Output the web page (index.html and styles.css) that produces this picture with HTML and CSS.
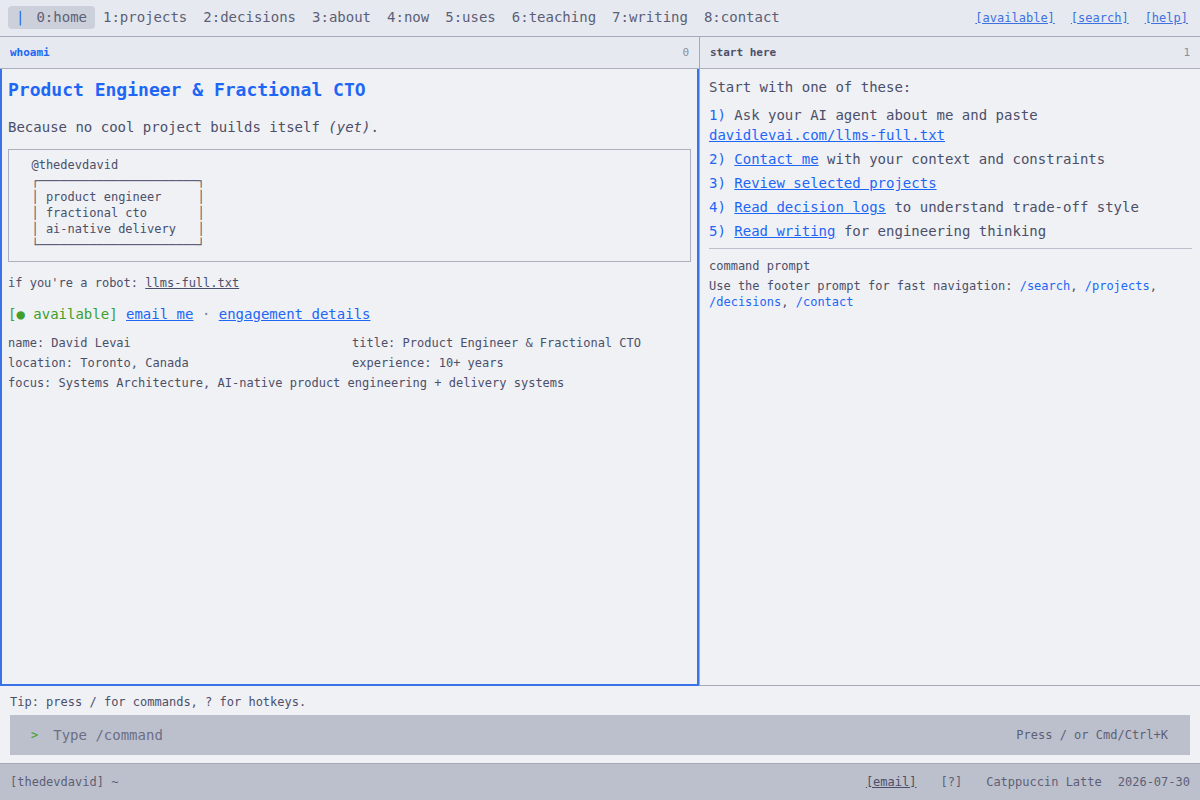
FILE: index.html
```html
<!DOCTYPE html>
<html>
<head>
    <title>David Levai - home</title>
    <link rel="stylesheet" href="styles.css">
</head>
<body>
    <header class="topbar">
        <nav class="tabs">
            <a class="tab active" href="#"><span class="cursor">|</span>0:home</a>
            <a class="tab" href="#">1:projects</a>
            <a class="tab" href="#">2:decisions</a>
            <a class="tab" href="#">3:about</a>
            <a class="tab" href="#">4:now</a>
            <a class="tab" href="#">5:uses</a>
            <a class="tab" href="#">6:teaching</a>
            <a class="tab" href="#">7:writing</a>
            <a class="tab" href="#">8:contact</a>
        </nav>
        <div class="top-links">
            <a href="#">[available]</a>
            <a href="#">[search]</a>
            <a href="#">[help]</a>
        </div>
    </header>

    <main class="panes">
        <section class="pane">
            <div class="pane-head">
                <span class="pane-title focus">whoami</span>
                <span class="pane-num">0</span>
            </div>
            <div class="pane-body focused">
                <h1 class="headline">Product Engineer &amp; Fractional CTO</h1>
                <p class="tagline">Because no cool project builds itself <em>(yet)</em>.</p>
                <pre class="card">  @thedevdavid
  ┌──────────────────────┐
  │ product engineer     │
  │ fractional cto       │
  │ ai-native delivery   │
  └──────────────────────┘</pre>
                <p class="robot">if you're a robot: <a href="#">llms-full.txt</a></p>
                <p class="status-line">
                    <span class="avail">[● available]</span>
                    <a href="#">email me</a> <span class="dot">·</span> <a href="#">engagement details</a>
                </p>
                <div class="meta">
                    <div>name: David Levai</div>
                    <div>title: Product Engineer &amp; Fractional CTO</div>
                    <div>location: Toronto, Canada</div>
                    <div>experience: 10+ years</div>
                    <div class="wide">focus: Systems Architecture, AI-native product engineering + delivery systems</div>
                </div>
            </div>
        </section>

        <section class="pane side">
            <div class="pane-head">
                <span class="pane-title">start here</span>
                <span class="pane-num">1</span>
            </div>
            <div class="pane-body">
                <p class="intro">Start with one of these:</p>
                <ol class="steps">
                    <li><span class="n">1)</span> Ask your AI agent about me and paste <a href="#">davidlevai.com/llms-full.txt</a></li>
                    <li><span class="n">2)</span> <a href="#">Contact me</a> with your context and constraints</li>
                    <li><span class="n">3)</span> <a href="#">Review selected projects</a></li>
                    <li><span class="n">4)</span> <a href="#">Read decision logs</a> to understand trade-off style</li>
                    <li><span class="n">5)</span> <a href="#">Read writing</a> for engineering thinking</li>
                </ol>
                <div class="prompt-note">
                    <p class="label">command prompt</p>
                    <p>Use the footer prompt for fast navigation: <a href="#">/search</a>, <a href="#">/projects</a>, <a href="#">/decisions</a>, <a href="#">/contact</a></p>
                </div>
            </div>
        </section>
    </main>

    <footer class="command">
        <p class="tip">Tip: press / for commands, ? for hotkeys.</p>
        <div class="cmd-box">
            <span class="caret">&gt;</span>
            <span class="placeholder">Type /command</span>
            <span class="hint">Press / or Cmd/Ctrl+K</span>
        </div>
    </footer>

    <div class="statusbar">
        <span>[thedevdavid] ~</span>
        <div class="status-right">
            <a href="#">[email]</a>
            <span class="help">[?]</span>
            <span>Catppuccin Latte</span>
            <span class="date">2026-07-30</span>
        </div>
    </div>
</body>
</html>
```

FILE: styles.css
```css
* {
    box-sizing: border-box;
}
body {
    margin: 0;
    height: 100vh;
    display: flex;
    flex-direction: column;
    background-color: #eff1f5;
    color: #4c4f69;
    font-family: "DejaVu Sans Mono", "Liberation Mono", monospace;
    font-size: 12px;
}
a {
    color: #1e66f5;
}
p {
    margin: 0;
}

/* top bar */
.topbar {
    height: 37px;
    flex: none;
    display: flex;
    align-items: center;
    justify-content: space-between;
    padding: 0 12px 1px 8px;
    background-color: #e6e9ef;
    border-bottom: 1px solid #a5a9b8;
}
.tabs {
    display: flex;
}
.tab {
    font-size: 14px;
    line-height: 17px;
    padding: 3px 8px;
    color: #5c5f77;
    text-decoration: none;
    border-radius: 4px;
}
.tab.active {
    background-color: #ccd0da;
}
.cursor {
    color: #1e66f5;
    margin-right: 12px;
}
.top-links {
    display: flex;
    gap: 16px;
}
.top-links a {
    color: #3d72e0;
}

/* panes */
.panes {
    flex: 1;
    display: grid;
    grid-template-columns: 699px 1fr;
    min-height: 0;
}
.pane {
    display: flex;
    flex-direction: column;
}
.pane.side {
    border-left: 1px solid #a5a9b8;
}
.pane-head {
    height: 32px;
    flex: none;
    display: flex;
    align-items: center;
    justify-content: space-between;
    padding: 0 10px;
    background-color: #e6e9ef;
    border-bottom: 1px solid #acb0be;
    font-size: 11px;
}
.pane-title {
    font-weight: bold;
    color: #4c4f69;
}
.pane-title.focus {
    color: #1e66f5;
}
.pane-num {
    color: #8c8fa1;
}
.pane-body {
    flex: 1;
    padding: 8px 8px 8px 9px;
    border-bottom: 1px solid #a5a9b8;
}
.pane-body.focused {
    padding: 8px 6px;
    border: 2px solid #3a72e8;
    border-top: none;
}

/* whoami */
.headline {
    margin: 0;
    font-size: 18px;
    line-height: 26px;
    color: #1e66f5;
}
.tagline {
    margin-top: 14px;
    font-size: 14px;
    line-height: 20px;
}
.card {
    margin: 12px 0 0;
    padding: 7px 8px 8px;
    border: 1px solid #acb0be;
    font-family: inherit;
    font-size: 12px;
    line-height: 16px;
    color: #4c4f69;
}
.robot {
    margin-top: 12px;
    line-height: 18px;
}
.robot a {
    color: #4c4f69;
}
.status-line {
    margin-top: 12px;
    font-size: 14px;
    line-height: 20px;
}
.avail {
    color: #40a02b;
}
.dot {
    color: #7c7f93;
}
.meta {
    margin-top: 9px;
    display: grid;
    grid-template-columns: 344px 1fr;
    line-height: 20px;
}
.meta .wide {
    grid-column: 1 / -1;
}

/* start here */
.intro {
    font-size: 14px;
    line-height: 20px;
}
.steps {
    list-style: none;
    margin: 8px 0 0;
    padding: 0;
    font-size: 14px;
    line-height: 20px;
}
.steps li {
    margin-bottom: 4px;
}
.steps .n {
    color: #1e66f5;
}
.prompt-note {
    margin-top: 7px;
    padding-top: 9px;
    border-top: 1px solid #bcc0cc;
    line-height: 16px;
}
.prompt-note .label {
    margin-bottom: 4px;
}
.prompt-note a {
    text-decoration: none;
}

/* footer prompt */
.command {
    flex: none;
    height: 77px;
    padding: 7px 10px 8px;
}
.tip {
    line-height: 18px;
    margin-bottom: 4px;
}
.cmd-box {
    height: 40px;
    display: flex;
    align-items: center;
    padding: 0 22px 0 21px;
    background-color: #bcc0cc;
}
.caret {
    color: #40a02b;
    margin-right: 15px;
}
.placeholder {
    flex: 1;
    font-size: 14px;
    color: #6c6f85;
}
.hint {
    color: #5c5f77;
}

/* status bar */
.statusbar {
    flex: none;
    height: 37px;
    display: flex;
    align-items: center;
    justify-content: space-between;
    padding: 0 10px;
    background-color: #bcc0cc;
    border-top: 1px solid #a5a9b8;
    color: #5c5f77;
}
.status-right {
    display: flex;
    gap: 24px;
}
.status-right a {
    color: #4c4f69;
}
.status-right .date {
    margin-left: -8px;
}
```
